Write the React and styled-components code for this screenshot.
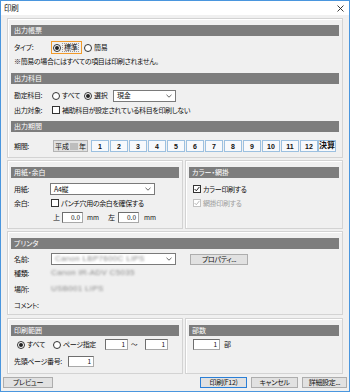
import React from 'react';
import styled, { createGlobalStyle, css } from 'styled-components';

const GlobalStyle = createGlobalStyle`
  html, body { margin: 0; padding: 0; background: #fff; }
  body {
    font-family: "Noto Sans CJK JP", "Noto Sans", sans-serif;
    font-size: 7px;
    letter-spacing: -0.35px;
    color: #111;
    font-feature-settings: "palt";
  }
  * { box-sizing: border-box; }
`;

const Window = styled.div`
  width: 350px;
  height: 392px;
  border: 1px solid #4a96de;
  background: #f0f0f0;
  display: flex;
  flex-direction: column;
`;

const TitleBar = styled.div`
  height: 14px;
  flex: none;
  background: #fff;
  display: flex;
  align-items: center;
  justify-content: space-between;
  padding: 0 5px 0 3px;
  font-size: 7.5px;
  line-height: 1;
`;

const Body = styled.div`
  display: flex;
  flex-direction: column;
  gap: 2px;
  padding: 3px 6px 0;
`;

const PanelRow = styled.div`
  display: flex;
  gap: 2px;
  margin-top: ${(p) => p.$mt || 0}px;
`;

const Panel = styled.div`
  border: 1px solid #d3d3d3;
  box-shadow: inset 1px 1px 0 #fff;
  padding: 6px 3px 4px;
  display: flex;
  flex-direction: column;
  height: ${(p) => p.$h}px;
  ${(p) => p.$w && css`width: ${p.$w}px; flex: none;`}
  ${(p) => p.$grow && css`flex: 1;`}
`;

const Header = styled.div`
  height: 11px;
  flex: none;
  background: #7d7d7d;
  color: #fff;
  font-size: 7px;
  letter-spacing: 0;
  line-height: 1;
  display: flex;
  align-items: center;
  padding-left: 3px;
  margin-top: ${(p) => p.$mt || 0}px;
`;

const Row = styled.div`
  display: flex;
  align-items: center;
  height: ${(p) => p.$h || 12}px;
  margin-top: ${(p) => p.$mt || 0}px;
  padding-left: ${(p) => (p.$pl ?? 3)}px;
  white-space: nowrap;
  line-height: 1;
  flex: none;
`;

const Label = styled.span`
  width: ${(p) => p.$w || 37}px;
  margin-left: ${(p) => p.$ml || 0}px;
  flex: none;
`;

const Text = styled.span`
  margin-left: ${(p) => p.$ml || 0}px;
  color: ${(p) => (p.$disabled ? '#a0a0a0' : 'inherit')};
`;

const Choice = styled.span`
  display: inline-flex;
  align-items: center;
  gap: 2px;
  flex: none;
  margin-left: ${(p) => p.$ml || 0}px;
  ${(p) => p.$w && css`width: ${p.$w}px;`}
  ${(p) =>
    p.$focus &&
    css`
      border: 1px solid #f19a2a;
      padding: 1px;
      height: 13px;
    `}
`;

const RadioCircle = styled.span`
  width: 8px;
  height: 8px;
  border-radius: 50%;
  border: 1px solid #333;
  background: #fff;
  display: inline-flex;
  align-items: center;
  justify-content: center;
  flex: none;
  &::after {
    content: '';
    width: 4px;
    height: 4px;
    border-radius: 50%;
    background: ${(p) => (p.$on ? '#222' : 'transparent')};
  }
`;

const FocusText = styled.span`
  outline: 1px dotted #9a9a9a;
  padding: 0 1px;
`;

const Box = styled.span`
  width: 8px;
  height: 8px;
  border: 1px solid ${(p) => (p.$disabled ? '#c2c2c2' : '#333')};
  background: #fff;
  flex: none;
  display: inline-flex;
  align-items: center;
  justify-content: center;
`;

const SelectBox = styled.span`
  width: ${(p) => p.$w}px;
  height: 12px;
  margin-left: ${(p) => p.$ml || 0}px;
  background: #fff;
  border: 1px solid #7a7a7a;
  display: inline-flex;
  align-items: center;
  justify-content: space-between;
  padding: 0 3px;
  flex: none;
`;

const Field = styled.span`
  width: ${(p) => p.$w}px;
  height: ${(p) => p.$h || 11}px;
  margin-left: ${(p) => p.$ml || 0}px;
  background: #fff;
  border: 1px solid #a9a9a9;
  border-top-color: #6e6e6e;
  border-left-color: #6e6e6e;
  display: inline-flex;
  align-items: center;
  justify-content: flex-end;
  padding-right: 2px;
  font-size: 6.5px;
  letter-spacing: 0;
  flex: none;
`;

const Unit = styled.span`
  font-size: 6.5px;
  letter-spacing: 0;
  flex: none;
  width: ${(p) => (p.$w ? `${p.$w}px` : 'auto')};
  margin-left: ${(p) => p.$ml || 0}px;
`;

const Btn = styled.span`
  width: ${(p) => p.$w}px;
  height: ${(p) => p.$h || 11}px;
  margin-left: ${(p) => p.$ml || 0}px;
  background: #e1e1e1;
  border: 1px solid ${(p) => (p.$default ? '#2b7fd6' : '#adadad')};
  display: inline-flex;
  align-items: center;
  justify-content: center;
  font-size: 7px;
  line-height: 1;
  flex: none;
`;

const PeriodBtn = styled.span`
  width: ${(p) => p.$w || 18}px;
  height: 12px;
  margin-left: ${(p) => p.$ml ?? 1}px;
  background: ${(p) => (p.$gray ? '#e1e1e1' : '#f7f9fc')};
  border: 1px solid ${(p) => (p.$gray ? '#b4b4b4' : '#9cc0e0')};
  display: inline-flex;
  align-items: center;
  justify-content: center;
  font-size: ${(p) => (p.$big ? 8 : 7)}px;
  font-weight: ${(p) => (p.$gray ? 400 : 700)};
  font-family: ${(p) => (p.$gray ? 'inherit' : '"Liberation Sans", "Noto Sans CJK JP", sans-serif')};
  letter-spacing: 0;
  line-height: 1;
  flex: none;
`;

const Masked = styled.span`
  display: inline-block;
  width: 8px;
  height: 7px;
  background: #bdbdbd;
  margin: 0 1px;
`;

const Blur = styled.span`
  color: #8a8a8a;
  filter: blur(1.3px);
  font-family: "Liberation Sans", sans-serif;
  font-size: 8px;
  letter-spacing: 0.3px;
`;

const Footer = styled.div`
  display: flex;
  align-items: center;
  padding: 3px 2px 0;
`;

const Spacer = styled.span`
  flex: 1;
`;

const Chevron = () => (
  <svg width="6" height="4" viewBox="0 0 6 4">
    <path d="M0.5 0.8 L3 3.2 L5.5 0.8" fill="none" stroke="#555" strokeWidth="0.9" />
  </svg>
);

const Check = ({ color = '#222' }) => (
  <svg width="6" height="6" viewBox="0 0 6 6">
    <path d="M0.6 3 L2.3 4.8 L5.4 0.9" fill="none" stroke={color} strokeWidth="1" />
  </svg>
);

const Radio = ({ on, children, ml, w, focus }) => (
  <Choice $ml={ml} $w={w} $focus={focus}>
    <RadioCircle $on={on} />
    {focus ? <FocusText>{children}</FocusText> : <span>{children}</span>}
  </Choice>
);

const CheckItem = ({ on, disabled, children, ml }) => (
  <Choice $ml={ml}>
    <Box $disabled={disabled}>{on && <Check color={disabled ? '#b8b8b8' : '#222'} />}</Box>
    <Text $disabled={disabled}>{children}</Text>
  </Choice>
);

export default function App() {
  const months = [1, 2, 3, 4, 5, 6, 7, 8, 9, 10, 11, 12];
  return (
    <>
      <GlobalStyle />
      <Window>
        <TitleBar>
          <span>印刷</span>
          <svg width="7" height="7" viewBox="0 0 7 7">
            <path d="M0.5 0.5 L6.5 6.5 M6.5 0.5 L0.5 6.5" stroke="#222" strokeWidth="0.9" />
          </svg>
        </TitleBar>
        <Body>
          <Panel $h={140}>
            <Header>出力帳票</Header>
            <Row $mt={5} $h={13}>
              <Label>タイプ:</Label>
              <Radio on focus w={31}>標準</Radio>
              <Radio ml={2}>簡易</Radio>
            </Row>
            <Row $mt={1} $h={13}>
              <Text>※簡易の場合にはすべての項目は印刷されません。</Text>
            </Row>
            <Header $mt={5}>出力科目</Header>
            <Row $mt={5} $h={13}>
              <Label $w={38}>勘定科目:</Label>
              <Radio w={32}>すべて</Radio>
              <Radio on w={29}>選択</Radio>
              <SelectBox $w={63}>
                <span>現金</span>
                <Chevron />
              </SelectBox>
            </Row>
            <Row $mt={2} $h={12}>
              <Label $w={38}>出力対象:</Label>
              <CheckItem>補助科目が設定されている科目を印刷しない</CheckItem>
            </Row>
            <Header $mt={5}>出力期間</Header>
            <Row $mt={8} $h={12}>
              <Label $w={39}>期間:</Label>
              <PeriodBtn $gray $w={35} $ml={0}>
                平成<Masked />年
              </PeriodBtn>
              {months.map((m, i) => (
                <PeriodBtn key={m} $ml={i === 0 ? 3 : 1}>
                  {m}
                </PeriodBtn>
              ))}
              <PeriodBtn $big $ml={0} $w={18}>決算</PeriodBtn>
            </Row>
          </Panel>

          <PanelRow>
            <Panel $h={69} $w={176}>
              <Header>用紙・余白</Header>
              <Row $mt={5}>
                <Label $w={36}>用紙:</Label>
                <SelectBox $w={105}>
                  <span>A4縦</span>
                  <Chevron />
                </SelectBox>
              </Row>
              <Row $mt={2}>
                <Label>余白:</Label>
                <CheckItem>パンチ穴用の余白を確保する</CheckItem>
              </Row>
              <Row $mt={3} $h={11} $pl={42}>
                <Label $w={9}>上</Label>
                <Field $w={21}>0.0</Field>
                <Unit $ml={4} $w={21}>mm</Unit>
                <Label $w={10}>左</Label>
                <Field $w={21}>0.0</Field>
                <Unit $ml={5}>mm</Unit>
              </Row>
            </Panel>
            <Panel $h={69} $grow>
              <Header>カラー・網掛</Header>
              <Row $mt={5} $pl={4}>
                <CheckItem on>カラー印刷する</CheckItem>
              </Row>
              <Row $mt={2} $pl={4}>
                <CheckItem on disabled>網掛印刷する</CheckItem>
              </Row>
            </Panel>
          </PanelRow>

          <Panel $h={84}>
            <Header>プリンタ</Header>
            <Row $mt={4}>
              <Label>名前:</Label>
              <SelectBox $w={125}>
                <Blur>Canon LBP7600C LIPS</Blur>
                <Chevron />
              </SelectBox>
              <Btn $w={58} $ml={14}>プロパティ...</Btn>
            </Row>
            <Row $mt={2}>
              <Label>種類:</Label>
              <Blur>Canon iR-ADV C5035</Blur>
            </Row>
            <Row $mt={4}>
              <Label>場所:</Label>
              <Blur>USB001 LIPS</Blur>
            </Row>
            <Row $mt={4}>
              <Label>コメント:</Label>
            </Row>
          </Panel>

          <PanelRow $mt={1}>
            <Panel $h={56} $w={176}>
              <Header>印刷範囲</Header>
              <Row $mt={3} $h={11} $pl={6}>
                <Radio on w={36}>すべて</Radio>
                <Radio w={52}>ページ指定</Radio>
                <Field $w={23}>1</Field>
                <Unit $ml={3} $w={14}>～</Unit>
                <Field $w={23}>1</Field>
              </Row>
              <Row $mt={6} $h={11}>
                <Label $w={54}>先頭ページ番号:</Label>
                <Field $w={26}>1</Field>
              </Row>
            </Panel>
            <Panel $h={56} $grow>
              <Header>部数</Header>
              <Row $mt={3} $h={11} $pl={4}>
                <Field $w={27}>1</Field>
                <Text $ml={4}>部</Text>
              </Row>
            </Panel>
          </PanelRow>
        </Body>
        <Footer>
          <Btn $w={50}>プレビュー</Btn>
          <Spacer />
          <Btn $w={47} $default>印刷(F12)</Btn>
          <Btn $w={47} $ml={4}>キャンセル</Btn>
          <Btn $w={45} $ml={4}>詳細設定...</Btn>
        </Footer>
      </Window>
    </>
  );
}
